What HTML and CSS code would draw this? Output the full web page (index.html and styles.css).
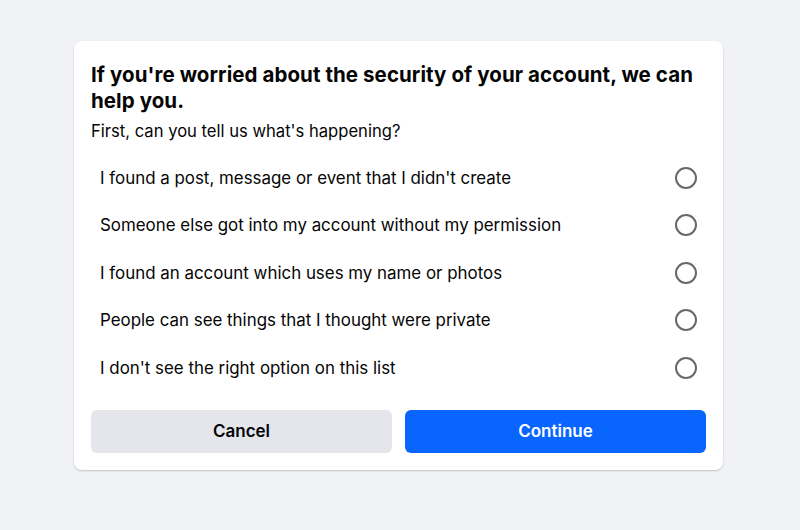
FILE: index.html
```html
<!DOCTYPE html>
<html>
<head>
<meta charset="utf-8">
<link rel="stylesheet" href="styles.css">
</head>
<body>
<div class="page">
  <div class="card">
    <h1 class="title">If you're worried about the security of your account, we can help you.</h1>
    <p class="subtitle">First, can you tell us what's happening?</p>
    <div class="options">
      <label class="option"><span class="option-text">I found a post, message or event that I didn't create</span><span class="radio"></span></label>
      <label class="option"><span class="option-text">Someone else got into my account without my permission</span><span class="radio"></span></label>
      <label class="option"><span class="option-text">I found an account which uses my name or photos</span><span class="radio"></span></label>
      <label class="option"><span class="option-text">People can see things that I thought were private</span><span class="radio"></span></label>
      <label class="option"><span class="option-text">I don't see the right option on this list</span><span class="radio"></span></label>
    </div>
    <div class="actions">
      <button class="btn btn-secondary">Cancel</button>
      <button class="btn btn-primary">Continue</button>
    </div>
  </div>
</div>
</body>
</html>
```
FILE: styles.css
```css
* { box-sizing: border-box; }
html, body { margin: 0; padding: 0; }
body {
  background: #f0f2f5;
  font-family: Inter, "Liberation Sans", sans-serif;
  color: #050505;
  width: 800px;
  height: 530px;
  overflow: hidden;
}
.page {
  padding-top: 41px;
  display: flex;
  justify-content: center;
}
.card {
  width: 649px;
  margin-left: -3px;
  background: #fff;
  border-radius: 8px;
  box-shadow: 0 1px 2px rgba(0,0,0,0.2);
  padding: 21px 17px 17px;
}
.title {
  margin: 0;
  font-size: 20.5px;
  font-weight: 700;
  line-height: 26px;
  letter-spacing: 0.07px;
}
.subtitle {
  margin: 7px 0 13px;
  font-size: 16.6px;
  line-height: 20px;
  font-weight: 400;
}
.options {
  display: flex;
  flex-direction: column;
}
.option {
  display: flex;
  align-items: center;
  justify-content: space-between;
  height: 47.5px;
  padding: 0 9px;
}
.option-text {
  font-size: 16.9px;
  line-height: 20px;
}
.radio {
  width: 22px;
  height: 22px;
  border: 2px solid #65686c;
  border-radius: 50%;
  flex: none;
}
.actions {
  display: grid;
  grid-template-columns: 1fr 1fr;
  gap: 13px;
  margin-top: 18px;
}
.btn {
  height: 43px;
  border: none;
  border-radius: 6px;
  font-family: inherit;
  font-size: 17px;
  font-weight: 600;
}
.btn-secondary { background: #e4e6eb; color: #050505; }
.btn-primary { background: #0866ff; color: #fff; }
```
